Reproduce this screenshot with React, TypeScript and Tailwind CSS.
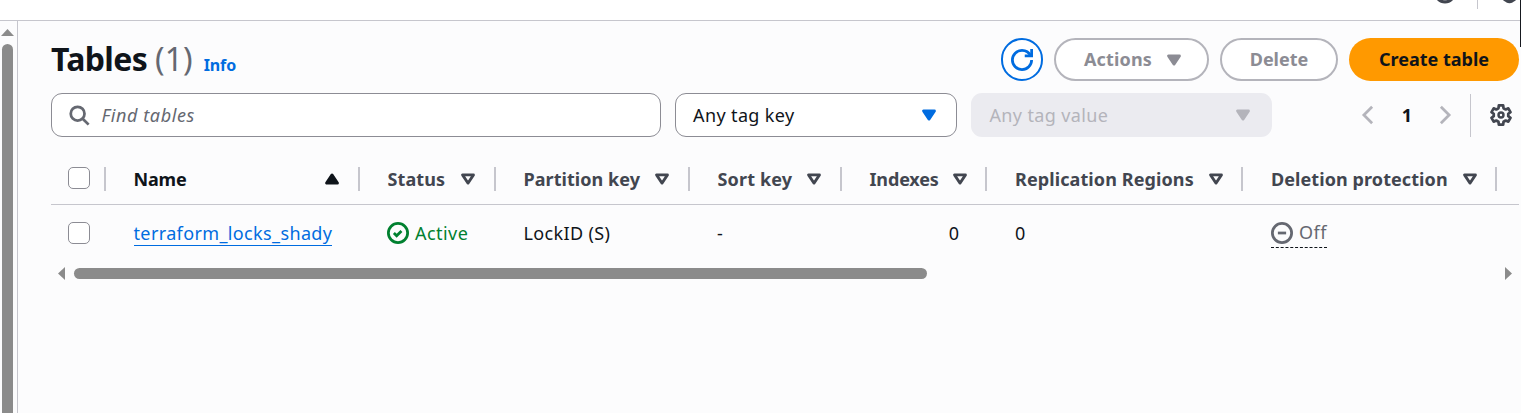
import type { ReactNode } from "react";

type IconProps = { className?: string; children: ReactNode };

function Icon({ className = "", children }: IconProps) {
  return (
    <svg
      viewBox="0 0 16 16"
      fill="none"
      stroke="currentColor"
      strokeWidth="2"
      strokeLinejoin="round"
      className={`size-[22px] shrink-0 ${className}`}
    >
      {children}
    </svg>
  );
}

function CaretFilled({ className = "" }: { className?: string }) {
  return (
    <Icon className={className}>
      <path d="M4 5h8l-4 6-4-6z" fill="currentColor" />
    </Icon>
  );
}

function SortCaret() {
  return (
    <Icon>
      <path d="M4 5h8l-4 6-4-6z" />
    </Icon>
  );
}

function Checkbox() {
  return <span className="block size-[22px] rounded-[5px] border-[1.4px] border-[#8c8c94] bg-white" />;
}

function HeaderCell({ label, sorted = false, className = "" }: { label: string; sorted?: boolean; className?: string }) {
  return (
    <div
      className={`flex items-center justify-between pr-[15px] pl-[27.5px] font-bold whitespace-nowrap ${
        sorted ? "text-[#0f141a]" : "text-[#424650]"
      }`}
    >
      <span className={className}>{label}</span>
      {sorted ? (
        <Icon>
          <path d="M4 11h8L8 5l-4 6z" fill="currentColor" />
        </Icon>
      ) : (
        <SortCaret />
      )}
    </div>
  );
}

function Separator() {
  return <div className="h-6 w-0.5 self-center bg-[#c6c6cd]" />;
}

const gridCols =
  "grid grid-cols-[53px_2px_252px_2px_134px_2px_192px_2px_150px_2px_143px_2px_254px_2px_252px_2px_22px]";

export default function App() {
  return (
    <div className="flex h-[413px] w-[1521px] flex-col overflow-hidden bg-[#fcfcfd] font-['Noto_Sans',sans-serif] text-[18px] leading-6 text-[#0f141a]">
      <header className="relative flex h-[21px] shrink-0 items-start justify-end border-b border-[#c6c6cd] bg-white">
        <div className="mr-[23px] flex h-2 w-[18px] items-start justify-center overflow-hidden">
          <svg viewBox="0 0 18 8" className="h-2 w-[18px] shrink-0 text-[#424650]">
            <circle cx="9" cy="-7.5" r="9.4" fill="none" stroke="currentColor" strokeWidth="3.2" />
          </svg>
        </div>
        <div className="mr-[25px] h-[9px] w-px bg-[#c6c6cd]" />
        <svg viewBox="0 0 13 8" className="mr-[5px] h-2 w-[13px] text-[#424650]">
          <path d="M0 0h13c-1 1-2 1.200-3.500 2.500-1.500 1-4.500 1-6 0C2 1.200 1 1 0 0z" fill="currentColor" />
        </svg>
        <div className="absolute top-0 right-0 h-[47px] w-px bg-[#16191f]" />
      </header>

      <div className="flex min-h-0 flex-1">
        <aside className="flex w-[18px] shrink-0 flex-col items-center border-r border-[#c6c6cd] pr-[3px] pt-2">
          <svg viewBox="0 0 13 7" className="h-[7px] w-[13px] shrink-0 text-[#8b8b8b]">
            <path d="M6.500 0 13 7H0z" fill="currentColor" />
          </svg>
          <div className="mt-2 ml-px w-[11px] flex-1 rounded-t-full bg-[#8b8b8b]" />
        </aside>

        <main className="min-w-0 flex-1 pt-[17px] pr-[2px] pl-[33px]">
          <div className="flex h-[43px] items-center justify-between">
            <div className="flex items-baseline pb-0.5">
              <h1 className="text-[32px] leading-[43px] font-bold tracking-[-0.65px]">Tables</h1>
              <span className="ml-[8px] text-[32px] leading-[43px] text-[#656871]">(1)</span>
              <a className="ml-[11px] text-[16px] font-bold tracking-[-0.1px] text-[#006ce0]">Info</a>
            </div>
            <div className="flex h-[43px] gap-[11px] font-bold">
              <button className="flex w-[42px] items-center justify-center rounded-full border-2 border-[#006ce0] bg-white text-[#006ce0]">
                <Icon className="shrink-0">
                  <g strokeLinejoin="miter">
                    <path d="M15 8c0 3.870-3.130 7-7 7s-7-3.130-7-7 3.130-7 7-7c2.790 0 5.200 1.630 6.330 4" />
                    <path d="M10 5h5V0" />
                  </g>
                </Icon>
              </button>
              <button className="flex w-[155px] items-center rounded-full border-2 border-[#b4b4bb] bg-white pb-0.5 pl-7 text-[#8c8c94]">
                <span className="tracking-[0.15px]">Actions</span>
                <CaretFilled className="mt-0.5 ml-[11px]" />
              </button>
              <button className="flex w-[118px] items-center justify-center rounded-full border-2 border-[#b4b4bb] bg-white pb-0.5 text-[#8c8c94]">
                Delete
              </button>
              <button className="flex w-[170px] items-center justify-center rounded-full bg-[#ff9900] pb-0.5">
                Create table
              </button>
            </div>
          </div>

          <div className="mt-3 flex h-11 items-center">
            <div className="flex h-11 w-[610px] items-center rounded-[11px] border border-[#8c8c94] bg-white pl-4 text-[#656871]">
              <Icon>
                <circle cx="7" cy="7" r="5" />
                <path d="m15 15-4.500-4.500" />
              </Icon>
              <span className="ml-[11.5px] tracking-[0.6px] italic">Find tables</span>
            </div>
            <div className="ml-[14px] flex h-11 w-[282px] items-center justify-between rounded-[11px] border border-[#8c8c94] bg-white pr-4 pl-[17px]">
              <span className="tracking-[0.38px]">Any tag key</span>
              <CaretFilled className="text-[#006ce0]" />
            </div>
            <div className="ml-[14px] flex h-11 w-[301px] items-center justify-between rounded-[11px] bg-[#ebebf0] pr-[18px] pl-[18.5px] text-[#b4b4bb]">
              <span className="tracking-[0.36px]">Any tag value</span>
              <CaretFilled />
            </div>
            <div className="flex flex-1 items-center justify-end">
              <Icon className="text-[#b4b4bb]">
                <path d="M11 2 5 8l6 6" strokeLinejoin="miter" />
              </Icon>
              <span className="mr-[22px] ml-[23px] font-bold">1</span>
              <Icon className="text-[#b4b4bb]">
                <path d="m5 2 6 6-6 6" strokeLinejoin="miter" />
              </Icon>
              <div className="ml-[14px] h-[43px] w-px bg-[#c6c6cd]" />
              <Icon className="mr-[7px] ml-[19px] text-[#424650]">
                <path
                  strokeWidth="2"
                  d="M6.430 1h3.140l.25 2.050 1.600.9 1.900-.75 1.570 2.750-1.600 1.150v1.800l1.600 1.150-1.570 2.750-1.900-.75-1.600.9L9.570 15H6.430l-.25-2.050-1.600-.9-1.900.75-1.570-2.750 1.600-1.150V7.100l-1.600-1.150L2.680 3.200l1.900.75 1.600-.9z"
                />
                <circle cx="8" cy="8" r="1.800" strokeWidth="1.800" />
              </Icon>
            </div>
          </div>

          <div className="mt-4 h-[114px] overflow-hidden">
            <div className={`${gridCols} h-[52px] border-b border-[#c6c6cd]`}>
              <div className="flex items-center pb-[1px] pl-[17px]">
                <Checkbox />
              </div>
              <Separator />
              <HeaderCell label="Name" sorted className="tracking-[-0.15px]" />
              <Separator />
              <HeaderCell label="Status" className="tracking-[0.1px]" />
              <Separator />
              <HeaderCell label="Partition key" className="tracking-[0.06px]" />
              <Separator />
              <HeaderCell label="Sort key" className="tracking-[0.15px]" />
              <Separator />
              <div className="flex items-center justify-between pr-[14px] pl-[27.5px] font-bold text-[#424650]">
                <span className="tracking-[-0.15px]">Indexes</span>
                <SortCaret />
              </div>
              <Separator />
              <div className="flex items-center justify-between pr-[14px] pl-[28px] font-bold text-[#424650]">
                <span className="tracking-[0.1px]">Replication Regions</span>
                <SortCaret />
              </div>
              <Separator />
              <div className="flex items-center justify-between pr-[14px] pl-[28px] font-bold text-[#424650]">
                <span className="tracking-[0.08px]">Deletion protection</span>
                <SortCaret />
              </div>
              <Separator />
              <div />
            </div>
            <div className={`${gridCols} h-[56px] items-center whitespace-nowrap`}>
              <div className="pl-[17px]">
                <Checkbox />
              </div>
              <div />
              <div className="pt-px pl-[27.5px]">
                <a className="inline-block h-[25px] border-b border-[#006ce0] tracking-[0.37px] text-[#006ce0]">
                  terraform_locks_shady
                </a>
              </div>
              <div />
              <div className="flex items-center pl-[27px] text-[#00802f]">
                <Icon>
                  <circle cx="8" cy="8" r="7" />
                  <path d="m5 8 2 2 3.521-3.521" strokeLinejoin="miter" />
                </Icon>
                <span className="ml-[6px] tracking-[0.45px]">Active</span>
              </div>
              <div />
              <div className="pl-[27.5px] tracking-[0.35px]">LockID (S)</div>
              <div />
              <div className="pl-[27px]">-</div>
              <div />
              <div className="pr-[26px] text-right">0</div>
              <div />
              <div className="pl-[28px]">0</div>
              <div />
              <div className="flex pl-[28px] text-[#656871]">
                <span className="mt-[3px] flex h-[27px] items-start border-b border-dashed border-[#0f141a]">
                  <Icon className="mt-px">
                    <circle cx="8" cy="8" r="7" />
                    <path d="M11 8H5" />
                  </Icon>
                  <span className="-mt-px ml-[6px] tracking-[0.5px]">Off</span>
                </span>
              </div>
            </div>
          </div>

          <div className="flex h-[13px] items-center">
            <svg viewBox="0 0 7 13" className="ml-[7px] h-[13px] w-[7px] text-[#8b8b8b]">
              <path d="M7 0v13L0 6.500z" fill="currentColor" />
            </svg>
            <div className="ml-[9px] h-[11px] w-[853px] rounded-full bg-[#8b8b8b]" />
            <svg viewBox="0 0 7 13" className="mr-[7px] ml-auto h-[13px] w-[7px] text-[#8b8b8b]">
              <path d="M0 0v13l7-6.500z" fill="currentColor" />
            </svg>
          </div>
        </main>
      </div>
    </div>
  );
}
